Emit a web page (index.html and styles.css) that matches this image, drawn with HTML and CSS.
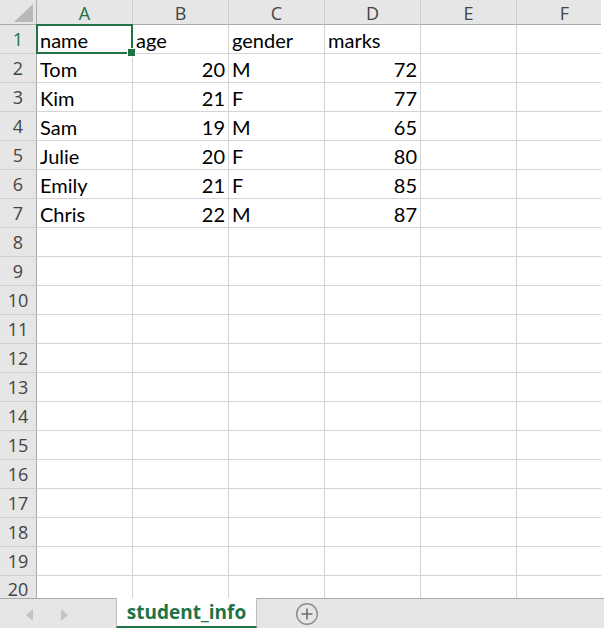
FILE: index.html
```html
<!DOCTYPE html>
<html>
<head>
<meta charset="utf-8">
<link rel="stylesheet" href="styles.css">
</head>
<body>
<div class="app">
  <div class="sheet">
    <div class="grid">
      <div class="corner"><svg width="36" height="25" viewBox="0 0 36 25"><polygon points="33,4 33,22 14,22" fill="#b8b8b8"/></svg></div>
      <div class="ch sel-h">A</div><div class="ch">B</div><div class="ch">C</div><div class="ch">D</div><div class="ch">E</div><div class="ch">F</div>

      <div class="rh sel-h">1</div><div class="c sel">name</div><div class="c">age</div><div class="c">gender</div><div class="c">marks</div><div class="c"></div><div class="c"></div>
      <div class="rh">2</div><div class="c">Tom</div><div class="c n">20</div><div class="c">M</div><div class="c n">72</div><div class="c"></div><div class="c"></div>
      <div class="rh">3</div><div class="c">Kim</div><div class="c n">21</div><div class="c">F</div><div class="c n">77</div><div class="c"></div><div class="c"></div>
      <div class="rh">4</div><div class="c">Sam</div><div class="c n">19</div><div class="c">M</div><div class="c n">65</div><div class="c"></div><div class="c"></div>
      <div class="rh">5</div><div class="c">Julie</div><div class="c n">20</div><div class="c">F</div><div class="c n">80</div><div class="c"></div><div class="c"></div>
      <div class="rh">6</div><div class="c">Emily</div><div class="c n">21</div><div class="c">F</div><div class="c n">85</div><div class="c"></div><div class="c"></div>
      <div class="rh">7</div><div class="c">Chris</div><div class="c n">22</div><div class="c">M</div><div class="c n">87</div><div class="c"></div><div class="c"></div>
      <div class="rh">8</div><div class="c"></div><div class="c"></div><div class="c"></div><div class="c"></div><div class="c"></div><div class="c"></div>
      <div class="rh">9</div><div class="c"></div><div class="c"></div><div class="c"></div><div class="c"></div><div class="c"></div><div class="c"></div>
      <div class="rh">10</div><div class="c"></div><div class="c"></div><div class="c"></div><div class="c"></div><div class="c"></div><div class="c"></div>
      <div class="rh">11</div><div class="c"></div><div class="c"></div><div class="c"></div><div class="c"></div><div class="c"></div><div class="c"></div>
      <div class="rh">12</div><div class="c"></div><div class="c"></div><div class="c"></div><div class="c"></div><div class="c"></div><div class="c"></div>
      <div class="rh">13</div><div class="c"></div><div class="c"></div><div class="c"></div><div class="c"></div><div class="c"></div><div class="c"></div>
      <div class="rh">14</div><div class="c"></div><div class="c"></div><div class="c"></div><div class="c"></div><div class="c"></div><div class="c"></div>
      <div class="rh">15</div><div class="c"></div><div class="c"></div><div class="c"></div><div class="c"></div><div class="c"></div><div class="c"></div>
      <div class="rh">16</div><div class="c"></div><div class="c"></div><div class="c"></div><div class="c"></div><div class="c"></div><div class="c"></div>
      <div class="rh">17</div><div class="c"></div><div class="c"></div><div class="c"></div><div class="c"></div><div class="c"></div><div class="c"></div>
      <div class="rh">18</div><div class="c"></div><div class="c"></div><div class="c"></div><div class="c"></div><div class="c"></div><div class="c"></div>
      <div class="rh">19</div><div class="c"></div><div class="c"></div><div class="c"></div><div class="c"></div><div class="c"></div><div class="c"></div>
      <div class="rh last">20</div><div class="c"></div><div class="c"></div><div class="c"></div><div class="c"></div><div class="c"></div><div class="c"></div>
    </div>
  </div>
  <div class="tabbar">
    <div class="nav">
      <svg width="8" height="12" viewBox="0 0 8 12"><polygon points="7,0 7,12 0,6" fill="#c4c4c4"/></svg>
      <svg width="8" height="12" viewBox="0 0 8 12"><polygon points="1,0 1,12 8,6" fill="#c4c4c4"/></svg>
    </div>
    <div class="tab">student_info</div>
    <div class="add"><svg width="24" height="24" viewBox="0 0 24 24"><circle cx="12" cy="12" r="10.3" fill="none" stroke="#8c8c8c" stroke-width="1.4"/><path d="M12 6.5v11M6.5 12h11" stroke="#6e6e6e" stroke-width="1.6"/></svg></div>
  </div>
</div>
</body>
</html>
```
FILE: styles.css
```css
* { box-sizing: border-box; }
html, body { margin: 0; padding: 0; background: #fff; }
.app { width: 604px; height: 628px; display: flex; flex-direction: column; overflow: hidden; }
.sheet { width: 601px; height: 598px; overflow: hidden; flex: none; }
.grid {
  display: grid;
  grid-template-columns: 37px repeat(6, 96px);
  grid-template-rows: 25px;
  grid-auto-rows: 29px;
  font-family: Lato, "Liberation Sans", sans-serif;
  font-size: 20px;
  color: #000;
}
.corner { background: #e6e6e6; border-right: 1px solid #ababab; border-bottom: 1px solid #ababab; }
.corner svg { display: block; }
.ch {
  background: #e6e6e6;
  border-right: 1px solid #cfcfcf;
  border-bottom: 1px solid #ababab;
  font-family: "Open Sans", "Noto Sans", sans-serif;
  font-size: 18px;
  color: #444;
  display: flex; align-items: center; justify-content: center;
  line-height: 1;
  padding-top: 1px;
}
.rh {
  background: #e6e6e6;
  border-right: 1px solid #ababab;
  border-bottom: 1px solid #cfcfcf;
  font-family: "Open Sans", "Noto Sans", sans-serif;
  font-size: 18px;
  color: #444;
  display: flex; align-items: center; justify-content: center;
  line-height: 1;
}
.rh.last { align-items: flex-start; padding-top: 4px; }
.sel-h { color: #217346; }
.c {
  border-right: 1px solid #d4d4d4;
  border-bottom: 1px solid #d4d4d4;
  display: flex; align-items: center;
  padding: 2px 3px 0 3px;
  line-height: 1;
  white-space: nowrap;
}
.c.n { justify-content: flex-end; padding-right: 3px; }
.sel { position: relative; }
.sel::before {
  content: "";
  position: absolute;
  left: -1px; top: -1px; right: -1px; bottom: -1px;
  border: 2px solid #217346;
}
.sel::after {
  content: "";
  position: absolute;
  right: -4px; bottom: -4px;
  width: 7px; height: 7px;
  background: #217346;
  border: 1px solid #fff;
}
.tabbar {
  flex: 1;
  background: #e6e6e6;
  border-top: 1px solid #a8a8a8;
  display: flex;
  align-items: stretch;
}
.nav { width: 116px; display: flex; align-items: center; gap: 26px; padding-left: 26px; padding-top: 2px; }
.nav svg { display: block; }
.tab {
  margin-top: -1px;
  width: 141px;
  background: #fff;
  border-left: 1px solid #bdbdbd;
  border-right: 1px solid #bdbdbd;
  border-bottom: 2px solid #217346;
  color: #217346;
  font-family: "Open Sans", "Noto Sans", sans-serif;
  font-weight: 700;
  font-size: 19px;
  display: flex; align-items: center; justify-content: center;
  padding-bottom: 1px;
}
.add { display: flex; align-items: center; padding-left: 38px; }
.add svg { display: block; }
```
